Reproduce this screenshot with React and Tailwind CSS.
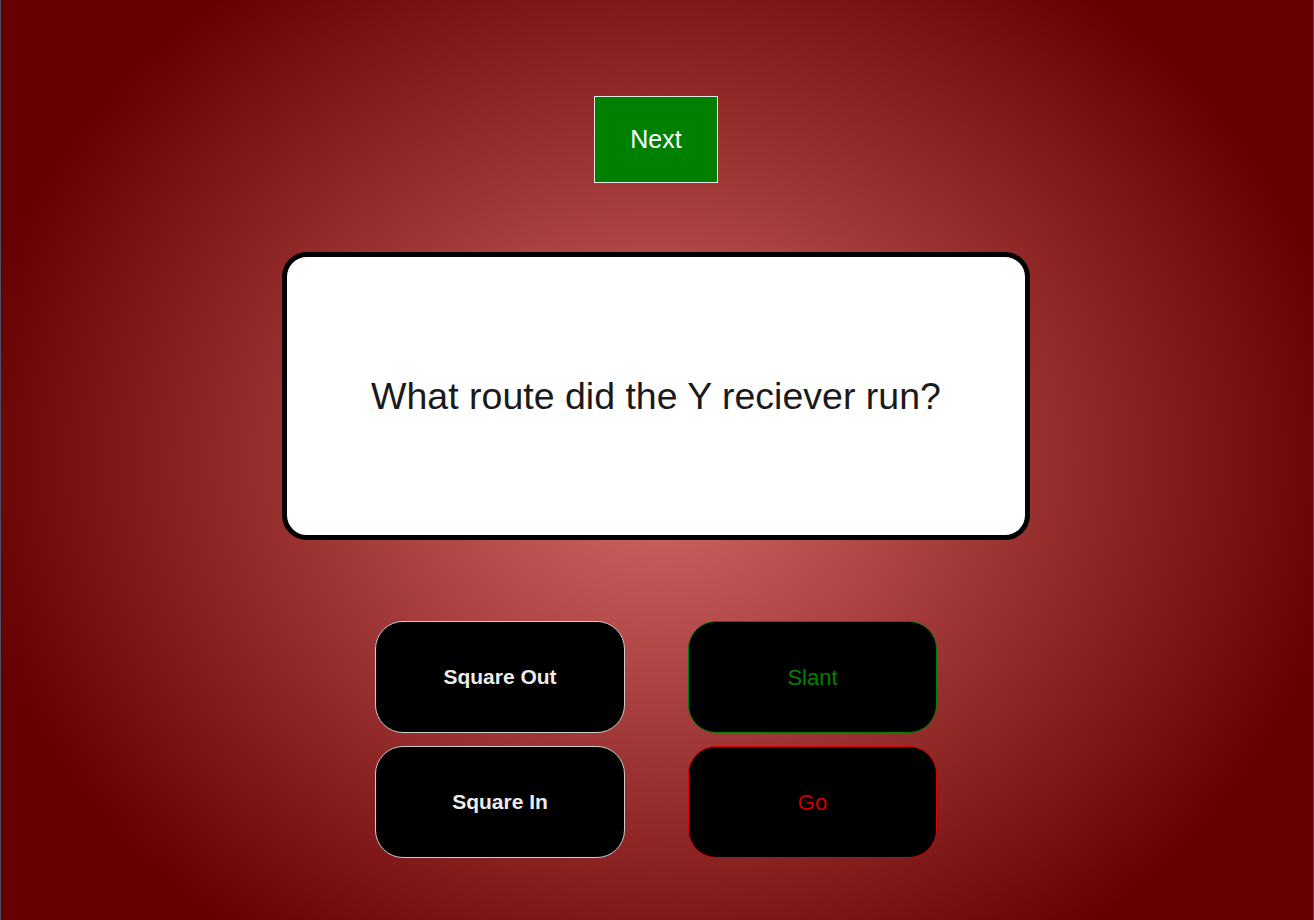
import React, { useState } from "react";

const answers = [
  { label: "Square Out", state: "idle" },
  { label: "Slant", state: "right" },
  { label: "Square In", state: "idle" },
  { label: "Go", state: "wrong" },
];

const stateClass = {
  idle: "border-[#cfcfcf] text-[#ececec] font-bold text-[21px]",
  right: "border-[#008000] text-[#008000] text-[22px]",
  wrong: "border-[#e00000] text-[#cc0000] text-[22px]",
};

const App = () => {
  const [picked, setPicked] = useState(null);

  return (
    <div
      className="min-h-[920px] w-full border-x border-[#4e4e60] bg-[radial-gradient(ellipse_700px_600px_at_50%_50%,#d66a6a_0%,#660000_100%)] flex flex-col items-center pt-[96px] pr-[2px] font-['Liberation_Sans',Arial,sans-serif]"
    >
      <button className="w-[124px] h-[87px] bg-[#008000] border border-[#e6e6e6] text-white text-[25px]">
        Next
      </button>

      <div className="mt-[69px] w-[748px] h-[288px] bg-white border-[5px] border-black rounded-[25px] flex items-center justify-center">
        <p className="text-[37.5px] text-[#1a1a1a]">What route did the Y reciever run?</p>
      </div>

      <div className="mt-[81px] grid grid-cols-[250px_249px] gap-x-[63px] gap-y-[13px]">
        {answers.map((a) => (
          <button
            key={a.label}
            onClick={() => setPicked(a.label)}
            className={`h-[112px] bg-black border rounded-[28px] ${stateClass[a.state]}`}
          >
            {a.label}
          </button>
        ))}
      </div>
    </div>
  );
};

export default App;
